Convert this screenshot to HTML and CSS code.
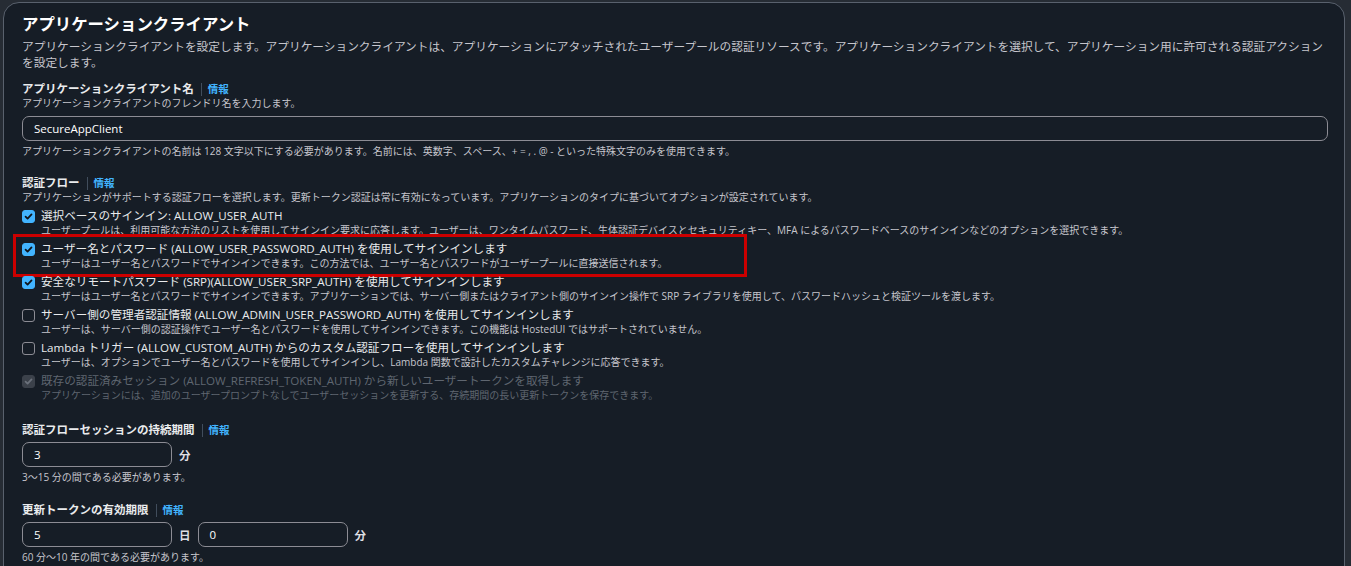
FILE: index.html
```html
<!DOCTYPE html>
<html lang="ja">
<head>
<meta charset="utf-8">
<title>アプリケーションクライアント</title>
<link rel="stylesheet" href="styles.css">
</head>
<body>
<div class="card">
  <h2 class="title">アプリケーションクライアント</h2>
  <p class="hdesc">アプリケーションクライアントを設定します。アプリケーションクライアントは、アプリケーションにアタッチされたユーザープールの認証リソースです。アプリケーションクライアントを選択して、アプリケーション用に許可される認証アクションを設定します。</p>

  <div class="field f-name">
    <div class="label">アプリケーションクライアント名<span class="sep"></span><a class="info">情報</a></div>
    <div class="desc">アプリケーションクライアントのフレンドリ名を入力します。</div>
    <div class="input wide">SecureAppClient</div>
    <div class="desc hint">アプリケーションクライアントの名前は 128 文字以下にする必要があります。名前には、英数字、スペース、+ = , . @ - といった特殊文字のみを使用できます。</div>
  </div>

  <div class="field f-flow">
    <div class="label">認証フロー<span class="sep"></span><a class="info">情報</a></div>
    <div class="desc">アプリケーションがサポートする認証フローを選択します。更新トークン認証は常に有効になっています。アプリケーションのタイプに基づいてオプションが設定されています。</div>
    <div class="options">
      <div class="opt">
        <span class="cb checked"><svg viewBox="0 0 12 12"><polyline points="2.8,6.2 5,8.4 9.3,3.6"/></svg></span>
        <div class="opt-text">
          <div class="opt-label">選択ベースのサインイン: ALLOW_USER_AUTH</div>
          <div class="opt-desc">ユーザープールは、利用可能な方法のリストを使用してサインイン要求に応答します。ユーザーは、ワンタイムパスワード、生体認証デバイスとセキュリティキー、MFA によるパスワードベースのサインインなどのオプションを選択できます。</div>
        </div>
      </div>
      <div class="opt highlighted">
        <span class="cb checked"><svg viewBox="0 0 12 12"><polyline points="2.8,6.2 5,8.4 9.3,3.6"/></svg></span>
        <div class="opt-text">
          <div class="opt-label">ユーザー名とパスワード (ALLOW_USER_PASSWORD_AUTH) を使用してサインインします</div>
          <div class="opt-desc">ユーザーはユーザー名とパスワードでサインインできます。この方法では、ユーザー名とパスワードがユーザープールに直接送信されます。</div>
        </div>
        <span class="redbox"></span>
      </div>
      <div class="opt">
        <span class="cb checked"><svg viewBox="0 0 12 12"><polyline points="2.8,6.2 5,8.4 9.3,3.6"/></svg></span>
        <div class="opt-text">
          <div class="opt-label">安全なリモートパスワード (SRP)(ALLOW_USER_SRP_AUTH) を使用してサインインします</div>
          <div class="opt-desc">ユーザーはユーザー名とパスワードでサインインできます。アプリケーションでは、サーバー側またはクライアント側のサインイン操作で SRP ライブラリを使用して、パスワードハッシュと検証ツールを渡します。</div>
        </div>
      </div>
      <div class="opt">
        <span class="cb"></span>
        <div class="opt-text">
          <div class="opt-label">サーバー側の管理者認証情報 (ALLOW_ADMIN_USER_PASSWORD_AUTH) を使用してサインインします</div>
          <div class="opt-desc">ユーザーは、サーバー側の認証操作でユーザー名とパスワードを使用してサインインできます。この機能は HostedUI ではサポートされていません。</div>
        </div>
      </div>
      <div class="opt">
        <span class="cb"></span>
        <div class="opt-text">
          <div class="opt-label">Lambda トリガー (ALLOW_CUSTOM_AUTH) からのカスタム認証フローを使用してサインインします</div>
          <div class="opt-desc">ユーザーは、オプションでユーザー名とパスワードを使用してサインインし、Lambda 関数で設計したカスタムチャレンジに応答できます。</div>
        </div>
      </div>
      <div class="opt disabled">
        <span class="cb checked"><svg viewBox="0 0 12 12"><polyline points="2.8,6.2 5,8.4 9.3,3.6"/></svg></span>
        <div class="opt-text">
          <div class="opt-label">既存の認証済みセッション (ALLOW_REFRESH_TOKEN_AUTH) から新しいユーザートークンを取得します</div>
          <div class="opt-desc">アプリケーションには、追加のユーザープロンプトなしでユーザーセッションを更新する、存続期間の長い更新トークンを保存できます。</div>
        </div>
      </div>
    </div>
  </div>

  <div class="field f-session">
    <div class="label">認証フローセッションの持続期間<span class="sep"></span><a class="info">情報</a></div>
    <div class="unit-row">
      <div class="input short">3</div>
      <span class="unit">分</span>
    </div>
    <div class="desc hint">3〜15 分の間である必要があります。</div>
  </div>

  <div class="field f-refresh">
    <div class="label">更新トークンの有効期限<span class="sep"></span><a class="info">情報</a></div>
    <div class="unit-row">
      <div class="input short">5</div>
      <span class="unit">日</span>
      <div class="input short">0</div>
      <span class="unit">分</span>
    </div>
    <div class="desc hint">60 分〜10 年の間である必要があります。</div>
  </div>
</div>
</body>
</html>
```

FILE: styles.css
```css
* { box-sizing: border-box; }

html, body {
  margin: 0;
  padding: 0;
  height: 100%;
  overflow: hidden;
}

body {
  background: #262c34;
  font-family: "Open Sans", "Noto Sans CJK JP", sans-serif;
  color: #dedee3;
}

.card {
  margin: 2px 0 0 3px;
  width: 1342px;
  min-height: 600px;
  background: #161d26;
  border: 1px solid #59616d;
  border-radius: 16px 16px 0 0;
  padding: 11px 16px 0 18px;
}

.title {
  margin: 0;
  font-size: 16.4px;
  line-height: 20px;
  font-weight: 700;
  color: #ffffff;
}

.hdesc {
  margin: 4px 0 0;
  max-width: 1302px;
  font-size: 11.7px;
  line-height: 16px;
  color: #c6c6cd;
}

.field { display: flex; flex-direction: column; }
.f-name { margin-top: 11px; }
.f-flow { margin-top: 17px; }
.f-session { margin-top: 20px; }
.f-refresh { margin-top: 18px; }

.label {
  display: flex;
  align-items: center;
  font-size: 11.5px;
  line-height: 16px;
  font-weight: 700;
  color: #e9ebed;
}

.sep {
  display: inline-block;
  width: 1px;
  height: 13px;
  background: #414d5c;
  margin: 0 6px 0 7px;
}

.info {
  color: #42b4ff;
  font-weight: 700;
  font-size: 10.5px;
  cursor: pointer;
}

.desc {
  font-size: 10px;
  line-height: 13px;
  color: #c6c6cd;
}

.hint { margin-top: 4px; }

.input {
  height: 25px;
  border: 1px solid #8c8c94;
  border-radius: 7px;
  background: #161d26;
  padding: 0 11px;
  display: flex;
  align-items: center;
  font-size: 11.5px;
  color: #ffffff;
}

.f-name .input { margin-top: 6px; }
.wide { width: 100%; }
.short { width: 150px; }

.unit-row {
  margin-top: 4px;
  display: flex;
  align-items: center;
  gap: 7px;
}

.unit {
  font-size: 11.5px;
  font-weight: 700;
  color: #dedee3;
}

.options {
  margin-top: 3px;
  display: flex;
  flex-direction: column;
  gap: 3px;
}

.opt {
  position: relative;
  display: grid;
  grid-template-columns: 13px 1fr;
  column-gap: 6px;
}

.cb {
  margin-top: 3px;
  width: 13px;
  height: 13px;
  border: 1.5px solid #8c8c94;
  border-radius: 3px;
  display: flex;
  align-items: center;
  justify-content: center;
}

.cb.checked {
  background: #42b4ff;
  border-color: #42b4ff;
}

.cb svg {
  width: 11px;
  height: 11px;
  fill: none;
  stroke: #0f141a;
  stroke-width: 1.9;
  stroke-linecap: round;
  stroke-linejoin: round;
}

.opt-label {
  font-size: 11.6px;
  line-height: 17px;
  color: #e9ebed;
}

.opt-desc {
  font-size: 10px;
  line-height: 13px;
  color: #c6c6cd;
}

.opt.disabled .cb.checked {
  background: #3b414a;
  border-color: #3b414a;
}

.opt.disabled .cb svg { stroke: #6b717b; }
.opt.disabled .opt-label,
.opt.disabled .opt-desc { color: #5f6670; }

.redbox {
  position: absolute;
  left: -9px;
  top: -6px;
  width: 734px;
  height: 43px;
  border: 3px solid #cc0000;
  pointer-events: none;
}
```
